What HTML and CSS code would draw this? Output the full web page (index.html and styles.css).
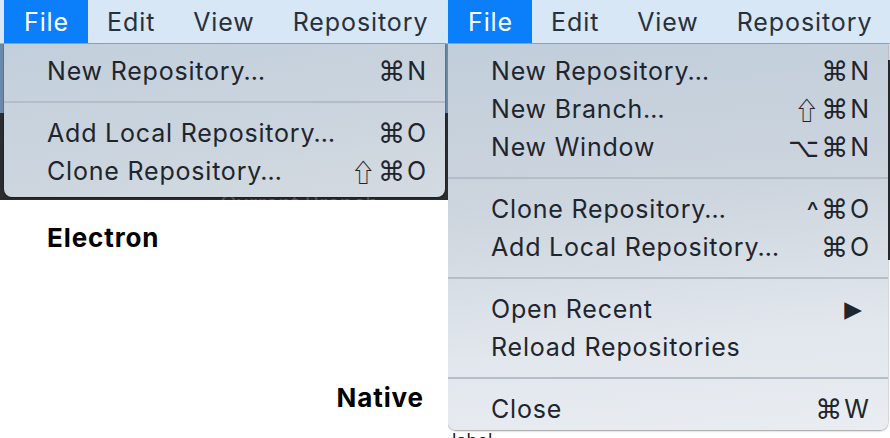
FILE: index.html
```html
<!DOCTYPE html>
<html>
<head>
<meta charset="utf-8">
<link rel="stylesheet" href="styles.css">
</head>
<body>
<div class="panel panel-left">
  <div class="menubar menubar-left">
    <div class="mb-item active">File</div>
    <div class="mb-item">Edit</div>
    <div class="mb-item">View</div>
    <div class="mb-item">Repository</div>
  </div>
  <div class="window">
    <div class="win-title"></div>
    <div class="win-toolbar"><span class="toolbar-text">Current Branch</span></div>
    <div class="win-body">
      <div class="label label-electron">Electron</div>
      <div class="label label-native">Native</div>
    </div>
  </div>
  <div class="menu menu-left">
    <div class="mi"><span>New Repository…</span><span class="sc"><span class="sym">⌘</span>N</span></div>
    <div class="sep"></div>
    <div class="mi"><span>Add Local Repository…</span><span class="sc"><span class="sym">⌘</span>O</span></div>
    <div class="mi"><span>Clone Repository…</span><span class="sc"><span class="sym shift">⇧</span><span class="sym">⌘</span>O</span></div>
  </div>
</div>
<div class="panel panel-right">
  <div class="menubar">
    <div class="mb-item active">File</div>
    <div class="mb-item">Edit</div>
    <div class="mb-item">View</div>
    <div class="mb-item">Repository</div>
  </div>
  <div class="window">
    <div class="win-strip"></div>
    <div class="win-dark"></div>
    <div class="win-body win-body-right">
      <div class="small-label">label</div>
    </div>
  </div>
  <div class="menu menu-right">
    <div class="mi"><span>New Repository…</span><span class="sc"><span class="sym">⌘</span>N</span></div>
    <div class="mi"><span>New Branch…</span><span class="sc"><span class="sym shift">⇧</span><span class="sym">⌘</span>N</span></div>
    <div class="mi"><span>New Window</span><span class="sc"><span class="sym">⌥</span><span class="sym">⌘</span>N</span></div>
    <div class="sep"></div>
    <div class="mi"><span>Clone Repository…</span><span class="sc"><span class="sym caret">^</span><span class="sym">⌘</span>O</span></div>
    <div class="mi"><span>Add Local Repository…</span><span class="sc"><span class="sym">⌘</span>O</span></div>
    <div class="sep"></div>
    <div class="mi"><span>Open Recent</span><span class="sc arrow">▶</span></div>
    <div class="mi"><span>Reload Repositories</span><span class="sc"></span></div>
    <div class="sep"></div>
    <div class="mi"><span>Close</span><span class="sc"><span class="sym">⌘</span>W</span></div>
  </div>
</div>
</body>
</html>
```

FILE: styles.css
```css
html, body {
  margin: 0;
  padding: 0;
}
body {
  width: 890px;
  height: 438px;
  overflow: hidden;
  display: flex;
  background: #ffffff;
  font-family: Inter, "Noto Sans", "DejaVu Sans", sans-serif;
}
.panel {
  position: relative;
  height: 438px;
  overflow: hidden;
  display: flex;
  flex-direction: column;
}
.panel-left { width: 448px; }
.panel-right { width: 442px; }

.menubar {
  height: 43px;
  flex: none;
  display: flex;
  background: #d8e7f5;
  border-bottom: 1px solid #9fb0c1;
}
.menubar-left { padding-left: 4px; }
.mb-item {
  display: flex;
  align-items: center;
  padding: 0 19px;
  font-size: 25px;
  color: #27313c;
  letter-spacing: 0.9px;
}
.mb-item.active {
  background: #0b7ffa;
  color: #ffffff;
  padding-left: 20px;
}

.window {
  flex: 1;
  display: flex;
  flex-direction: column;
}
.win-title {
  height: 69px;
  background: #6b8aab;
}
.win-toolbar {
  height: 87px;
  background: #2b2c30;
  display: flex;
  align-items: flex-end;
  padding-left: 220px;
  overflow: hidden;
}
.toolbar-text {
  color: #5b5d62;
  font-size: 22px;
  line-height: 14px;
  height: 4px;
  overflow: hidden;
}
.win-body {
  flex: 1;
  background: #ffffff;
  display: flex;
  flex-direction: column;
}
.label {
  font-weight: 700;
  font-size: 26px;
  letter-spacing: 0.9px;
  color: #000000;
}
.label-electron {
  padding: 22px 0 0 47px;
}
.label-native {
  margin-top: auto;
  align-self: flex-end;
  padding: 0 24px 25px 0;
}
.win-strip {
  height: 16px;
  background: #dfe3e7;
}
.win-dark {
  height: 200px;
  background: #2b2c30;
}
.win-body-right {
  justify-content: flex-end;
}
.small-label {
  font-size: 18px;
  color: #222;
  padding-left: 4px;
  height: 8px;
  overflow: hidden;
  line-height: 22px;
}

.menu {
  position: absolute;
  top: 44px;
  display: flex;
  flex-direction: column;
  padding-top: 8px;
  border-radius: 0 0 8px 8px;
  box-shadow: 0 1px 2px rgba(0, 0, 0, 0.35), 0 0 0 0.5px rgba(0, 0, 0, 0.15);
  color: #1e252d;
}
.menu-left {
  left: 4px;
  width: 441px;
  padding-bottom: 7px;
  background: linear-gradient(170deg, #c2cfdc 0%, #cad4de 50%, #d4dae1 100%);
}
.menu-right {
  left: 0;
  width: 440px;
  padding-bottom: 2px;
  background: linear-gradient(175deg, #c1cedb 0%, #cdd5de 40%, #e2e7ed 75%, #e9edf2 100%);
}
.mi {
  height: 38px;
  display: flex;
  align-items: center;
  justify-content: space-between;
  padding: 0 19px 0 43px;
  font-size: 25px;
  letter-spacing: 0.8px;
}
.sc {
  display: flex;
  align-items: center;
  gap: 2px;
  letter-spacing: 0;
}
.sym {
  font-family: "DejaVu Sans", sans-serif;
  font-size: 27px;
  line-height: 1;
}
.shift {
  font-family: "Noto Sans CJK JP", "DejaVu Sans", sans-serif;
  font-size: 25px;
}
.caret {
  font-family: Inter, sans-serif;
  font-size: 26px;
  margin-top: 4px;
}
.arrow {
  font-family: "DejaVu Sans", sans-serif;
  font-size: 23px;
  margin-right: 7px;
}
.sep {
  height: 24px;
  display: flex;
  align-items: center;
}
.sep::before {
  content: "";
  display: block;
  width: 100%;
  height: 2px;
  background: #b5bec8;
}
```
